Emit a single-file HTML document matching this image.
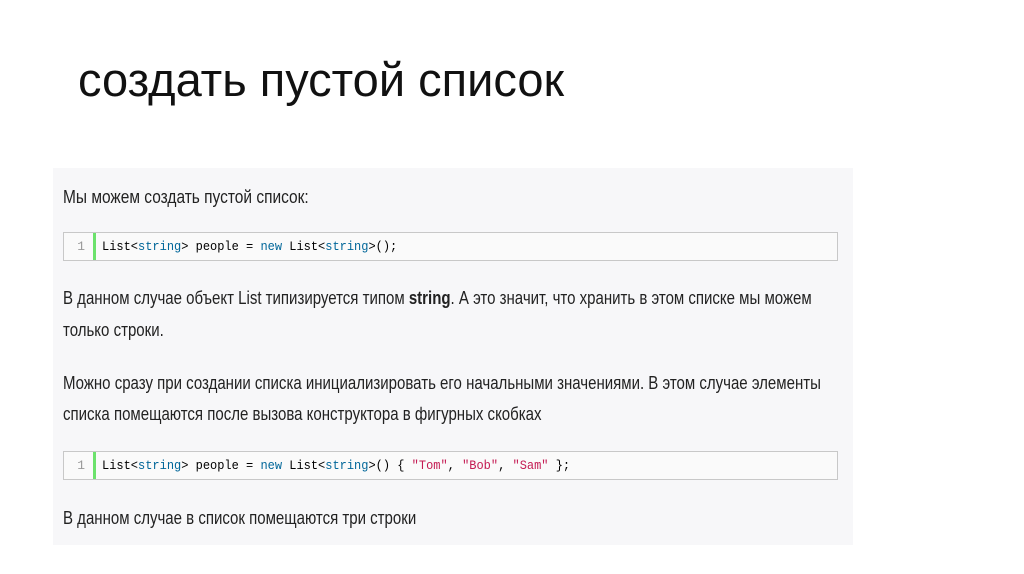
<!DOCTYPE html>
<html><head><meta charset="utf-8"><style>
body{margin:0;width:1024px;height:574px;background:#fff;position:relative;overflow:hidden;font-family:"Liberation Sans",sans-serif;}
.t{position:absolute;left:78px;top:52px;font-size:47px;color:#111;}
.panel{position:absolute;left:53px;top:168px;width:800px;height:377px;background:#f7f7f9;}
.l{position:absolute;left:63px;font-size:18px;color:#222;white-space:nowrap;transform-origin:0 50%;transform:scaleX(0.834);line-height:20px;}
.code{position:absolute;left:63px;width:775px;height:29px;background:#fafafa;border:1px solid #c8c8c8;box-sizing:border-box;font-family:"Liberation Mono",monospace;font-size:13px;}
.code .n{position:absolute;left:0;top:0;width:21px;height:27px;text-align:right;color:#999;line-height:27px;}
.code .bar{position:absolute;left:29px;top:0;width:3px;height:27px;background:#6ce26c;}
.code .c{position:absolute;left:38px;top:0;line-height:27px;color:#000;white-space:pre;transform-origin:0 50%;transform:scaleX(0.923);}
.k{color:#006699}.s{color:#c41a52}
</style></head><body>
<div class="t">создать пустой список</div>
<div class="panel"></div>
<div class="l" style="top:187px;transform:scaleX(0.86)">Мы можем создать пустой список:</div>
<div class="code" style="top:232px"><span class="n">1</span><span class="bar"></span><span class="c">List&lt;<span class="k">string</span>&gt; people = <span class="k">new</span> List&lt;<span class="k">string</span>&gt;();</span></div>
<div class="l" style="top:288px">В данном случае объект List типизируется типом <b>string</b>. А это значит, что хранить в этом списке мы можем</div>
<div class="l" style="top:320px">только строки.</div>
<div class="l" style="top:373px">Можно сразу при создании списка инициализировать его начальными значениями. В этом случае элементы</div>
<div class="l" style="top:404px">списка помещаются после вызова конструктора в фигурных скобках</div>
<div class="code" style="top:451px"><span class="n">1</span><span class="bar"></span><span class="c">List&lt;<span class="k">string</span>&gt; people = <span class="k">new</span> List&lt;<span class="k">string</span>&gt;() { <span class="s">"Tom"</span>, <span class="s">"Bob"</span>, <span class="s">"Sam"</span> };</span></div>
<div class="l" style="top:508px">В данном случае в список помещаются три строки</div>
</body></html>
